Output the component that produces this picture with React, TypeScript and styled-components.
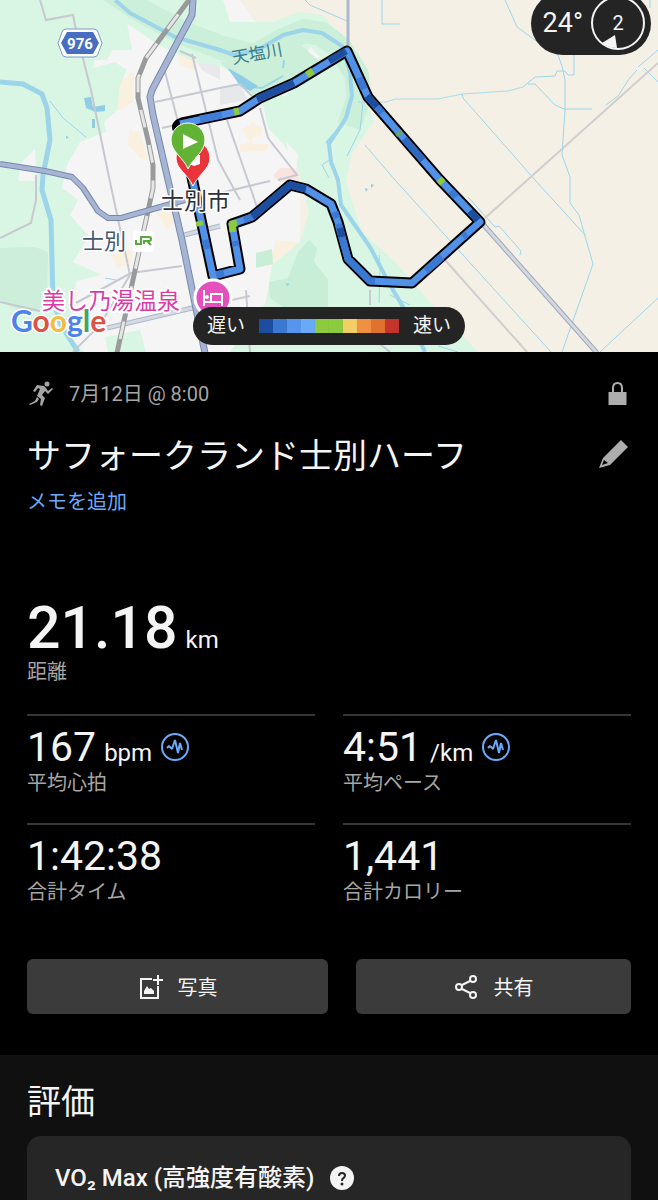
import React from "react";
import styled, { createGlobalStyle } from "styled-components";

const GlobalStyle = createGlobalStyle`
  * {
    box-sizing: border-box;
  }
  body {
    margin: 0;
    background-color: #000;
    color: #f4f4f4;
    font-family: Roboto, "Noto Sans CJK JP", sans-serif;
  }
  h1, h2, h3, p, dl, dd {
    margin: 0;
    font-weight: 400;
  }
`;

const MapSection = styled.section`
  position: relative;
  overflow: hidden;
  & > svg {
    display: block;
    width: 100%;
    height: auto;
  }
`;

const Weather = styled.div`
  position: absolute;
  top: -8px;
  right: 7px;
  display: flex;
  align-items: center;
  gap: 8px;
  padding: 4px 6px 5px 12px;
  border-radius: 32px;
  background-color: #242424;
  font-size: 27px;
`;

const Legend = styled.div`
  position: absolute;
  bottom: 7px;
  left: 50%;
  transform: translateX(-50%);
  display: flex;
  align-items: center;
  gap: 14px;
  padding: 0 14px;
  height: 38px;
  border-radius: 19px;
  background-color: #242424;
  font-size: 19px;
  line-height: 24px;
  white-space: nowrap;
`;

const Scale = styled.div`
  display: flex;
`;

const ScaleStep = styled.span<{ $color: string }>`
  width: 14px;
  height: 14px;
  background-color: ${(props) => props.$color};
`;

const Summary = styled.section`
  padding: 24px 27px 41px;
`;

const Row = styled.div`
  display: flex;
  align-items: center;
  justify-content: space-between;
`;

const DateLine = styled.div`
  display: flex;
  align-items: center;
  gap: 14px;
  height: 36px;
  color: #a6a6a6;
  font-size: 20px;
  line-height: 24px;
`;

const IconButton = styled.button`
  display: flex;
  padding: 0;
  border: 0;
  background: none;
  color: #adadad;
`;

const Title = styled.h1`
  font-size: 34px;
  line-height: 48px;
`;

const TitleRow = styled(Row)`
  margin-top: 20px;
`;

const MemoLink = styled.a`
  display: block;
  width: fit-content;
  margin-top: 8px;
  color: #6aaaf8;
  font-size: 20px;
  line-height: 28px;
  text-decoration: none;
`;

const Distance = styled.dl`
  display: flex;
  flex-direction: column-reverse;
  margin: 80px 0 30px;
`;

const StatGrid = styled.dl`
  display: grid;
  grid-template-columns: 1fr 1fr;
  column-gap: 28px;
`;

const Stat = styled.div`
  display: flex;
  flex-direction: column-reverse;
  padding: 7px 0 28px;
  border-top: 2px solid #363636;
`;

const Label = styled.dt`
  color: #a6a6a6;
  font-size: 20px;
  line-height: 24px;
`;

const Value = styled.dd<{ $large?: boolean }>`
  display: flex;
  align-items: baseline;
  gap: 8px;
  font-size: ${(props) => (props.$large ? "59px" : "41px")};
  font-weight: ${(props) => (props.$large ? 500 : 400)};
  line-height: ${(props) => (props.$large ? "64px" : "48px")};
`;

const Unit = styled.span`
  font-size: 24px;
  font-weight: 400;
  line-height: 24px;
`;

const ChartButton = styled(IconButton)`
  align-self: center;
  color: #6aaaf8;
`;

const Actions = styled.div`
  display: flex;
  gap: 28px;
  margin-top: 27px;
`;

const ActionButton = styled.button<{ $grow: number }>`
  flex: ${(props) => props.$grow} 1 0;
  display: flex;
  align-items: center;
  justify-content: center;
  gap: 14px;
  height: 55px;
  border: 0;
  border-radius: 6px;
  background-color: #3b3b3b;
  color: #f4f4f4;
  font-family: inherit;
  font-size: 20px;
`;

const Ratings = styled.section`
  padding: 23px 27px 0;
  background-color: #101010;
`;

const RatingsTitle = styled.h2`
  margin-bottom: 10px;
  font-size: 34px;
  line-height: 48px;
`;

const RatingCard = styled.article`
  display: flex;
  align-items: center;
  gap: 16px;
  padding: 24px 28px 4px;
  border-radius: 14px 14px 0 0;
  background-color: #262626;
`;

const RatingName = styled.h3`
  font-size: 24px;
  font-weight: 500;
  line-height: 36px;
`;

const paceColors = [
  "#1d4d9f",
  "#3b78d1",
  "#5596ec",
  "#69a9f8",
  "#8cca3f",
  "#8cca3f",
  "#f3cd65",
  "#ee9142",
  "#df722d",
  "#c4342b",
];

const routeSegments = [
  { color: "#3f7dd8", d: "M200 119L222 115" },
  { color: "#8cca3f", d: "M234 112L239 111" },
  { color: "#1d4d9f", d: "M257 99L294 83" },
  { color: "#8cca3f", d: "M307 75L313 71" },
  { color: "#1d4d9f", d: "M329 61L346 51" },
  { color: "#3b78d1", d: "M359 78L364 89" },
  { color: "#1d4d9f", d: "M367 96L377 107" },
  { color: "#3b78d1", d: "M377 107L382 113" },
  { color: "#69a957", d: "M398 132L400 135" },
  { color: "#2f67bd", d: "M404 139L423 160" },
  { color: "#8cca3f", d: "M439 179L443 183" },
  { color: "#3b78d1", d: "M451 191L456 197" },
  { color: "#1d4d9f", d: "M470 211L478 220" },
  { color: "#3b78d1", d: "M467 234L463 237" },
  { color: "#3b78d1", d: "M442 257L426 271" },
  { color: "#3b78d1", d: "M375 281L370 281L348 259L338 224" },
  { color: "#1d4d9f", d: "M342 237L340 228" },
  { color: "#3b78d1", d: "M337 218L335 212" },
  { color: "#1d4d9f", d: "M306 189L290 185L252 217" },
  { color: "#3b78d1", d: "M252 217L244 220" },
  { color: "#8cca3f", d: "M237 223L232 224L233 232" },
  { color: "#3b78d1", d: "M235 241L236 246" },
  { color: "#3b78d1", d: "M224 273L216 275" },
  { color: "#3b78d1", d: "M207 249L205 240" },
  { color: "#8cca3f", d: "M200 226L199 221" },
  { color: "#8a7d43", d: "M193 184L192 178" },
];

const CourseMap = () => (
  <svg viewBox="0 0 658 352" role="img" aria-label="コースマップ">
    <rect width="658" height="352" fill="#f4f0e6" />
    {/* town */}
    <path d="M0 0H240L300 90L300 352H0Z" fill="#f5f5f6" />
    <g fill="#faf0e0">
      <path d="M120 82L134 70L133 102L117 112Z" />
      <path d="M129 130L140 132L148 160L140 158L128 145Z" />
      <path d="M178 55L192 55L196 70L180 65Z" />
      <path d="M242 130L253 122L263 130L260 136L252 138L253 144L269 144L266 151L239 152L240 145L250 142Z" />
      <path d="M110 255L130 250L133 262L118 268Z" />
      <path d="M156 212L165 205L180 215L168 230Z" />
      <path d="M276 240L298 242L296 266L270 265Z" />
    </g>
    <path d="M273 176L280 168L297 168L300 180L280 182Z" fill="#fae4e0" />
    <path d="M194 58L220 66V80L202 70Z" fill="#e9e9eb" />
    <path d="M220 88L240 84L248 100L220 105Z" fill="#e7e8ea" />
    {/* fields and woods */}
    <g fill="#d9f5e3">
      <path d="M0 0H107L127 22L132 50L112 50L107 60L95 60L93 68L115 62L127 70L120 85L117 110L104 122L106 132L80 142L67 165L62 188L78 200L70 215L89 236L73 262L102 275L76 281L75 302L64 330L84 352H0Z" />
      <path d="M107 0H223L230 22H274L298 12L323 15L346 45L366 100L374 122L352 152L346 182L362 232L395 262L430 302L478 352H230L266 302L272 265L300 242L309 212L297 166L284 145L268 128L262 99L250 84L220 66L196 62L160 46L128 24Z" />
      <path d="M105 337L140 330L146 352H108Z" />
    </g>
    <path d="M0 248L35 247L48 252L47 305L25 315L0 300Z" fill="#cdeedb" />
    <path d="M309 240L317 248L314 262L328 280V312H290L270 298L269 282L288 278L298 252Z" fill="#c9eed7" />
    <path d="M256 253L272 249L273 264L256 268Z" fill="#c9eed7" />
    <path d="M35 149L37 181H18L21 163Z" fill="#f5f5f6" />
    <path d="M311 47L320 57L290 91L284 97L274 86ZM286 142L298 154L296 172L290 160Z" fill="#f5f5f6" />
    <path d="M107 -12L140 10L185 34L222 48L255 56L283 40L305 31L322 34L340 48L357 75L358 100L349 126" fill="none" stroke="#cbefd9" strokeWidth="24" strokeLinejoin="round" />
    <path d="M220 62L256 98L292 82L320 62L300 44L268 58Z" fill="#cbefd9" />

    {/* water */}
    <g fill="none" stroke="#9cd5ea" strokeLinejoin="round">
      <path d="M0 82L23 84L42 94L47 108L50 140L43 175L42 190L51 220L53 300L61 325L78 352" strokeWidth="5" />
      <path d="M115 0L130 13L175 37L220 50L234 55L258 50L283 35L303 30L322 33L342 46L350 72L352 96L346 118L329 144L331 162L338 180L341 205L370 247L390 285L402 305L425 352" strokeWidth="4" />
      <path d="M349 103L344 123L326 143" strokeWidth="2" />
      <path d="M230 70L242 86L262 88L283 76M284 60L283 68" strokeWidth="2" />
      <path d="M329 160L322 165L329 178M379 255L380 270L379 303M390 295L400 300L410 305" strokeWidth="1" />
      <path d="M50 101L63 118L86 137M363 103L360 130L347 156" strokeWidth="1" />
      <path d="M305 0L310 5L347 21M382 0V24H400" />
      <path d="M505 0L517 27L535 40L558 55L562 66L565 80V110L562 155L570 177V203L579 215L593 264L575 315L562 352" />
      <path d="M574 54V75H568L565 71H557L555 76L535 77L523 87" />
      <path d="M523 87L508 91L462 94L438 99L420 99L395 99L386 102L358 102" opacity="0.8" />
      <path d="M528 84H535L555 105L564 109H592" />
      <path d="M462 94L463 98L535 180L585 235" />
      <path d="M365 145L395 180L551 352M658 298L600 352" />
      <path d="M650 0V8M638 67L658 50M606 105L618 96L629 79L637 70M644 68L658 82" />
      <path d="M468 197L495 227L499 226L521 251L520 255M438 346L458 352M105 278L116 280" />
    </g>
    <g fill="#8fcde7">
      <path d="M84 98L91 97L93 107L105 105V111L95 112L91 110L86 108ZM92 119H95V128H92Z" />
      <path d="M228 68L242 76L258 86L250 91L240 86Z" />
      <path d="M365 188L368 189L366 192ZM371 184L374 185L371 188ZM286 283L290 284L287 286ZM66 136L69 137L66 139Z" />
    </g>

    {/* minor roads */}
    <g fill="none" stroke="#c7c9d1" strokeWidth="2">
      <path d="M40 0L46 20L73 15L77 35L91 90L110 182L130 275" />
      <path d="M36 175V200L31 223L0 238M73 352L100 325L130 275" />
      <path d="M0 302L40 311M76 303L131 273L182 266" />
      <path d="M155 102L220 88M162 128L180 124M165 72L178 122M192 54L218 160L240 200" />
      <path d="M180 51L196 58M227 120L247 178L258 210M260 108L268 138L297 175L278 180M220 88L240 84L260 104" />
      <path d="M220 193L270 181M246 290L250 352M218 303L250 296M370 290V305M380 344L390 352" />
      <path d="M658 63L485 218M445 260L527 352" stroke="#d1cecf" />
      <path d="M348 0V48" stroke="#acb9ca" strokeWidth="3" />
    </g>
    <path d="M107 328L205 305M184 235L220 226" fill="none" stroke="#aeb8ca" strokeWidth="5" />
    <path d="M107 328L205 305M184 235L220 226" fill="none" stroke="#d4d9e3" strokeWidth="3" />
    <path d="M481 222L597 353" stroke="#9da6b5" strokeWidth="5" />
    <path d="M481 222L597 353" stroke="#d3d9e2" strokeWidth="3" />

    {/* railway */}
    <path d="M189 0L146 58L138 78V98L148 140L153 165V188L117 353" fill="none" stroke="#999a9b" strokeWidth="5" />
    <path d="M189 0L146 58L138 78V98L148 140L153 165V188L117 353" fill="none" stroke="#e5e5e5" strokeWidth="3" strokeDasharray="18 18" strokeDashoffset="-18" />

    {/* highways */}
    <g fill="none" strokeLinejoin="round">
      <path d="M193 0L192 15L152 90L150 97L153 115L168 180L182 240L205 353" stroke="#7888aa" strokeWidth="7" />
      <path d="M0 164L45 171L72 177L83 188L98 211L108 218L121 218L185 200" stroke="#7888aa" strokeWidth="6" />
      <path d="M193 0L192 15L152 90L150 97L153 115L168 180L182 240L205 353" stroke="#a7b5d5" strokeWidth="5" />
      <path d="M0 164L45 171L72 177L83 188L98 211L108 218L121 218L185 200" stroke="#a7b5d5" strokeWidth="4" />
    </g>

    <g fontFamily='"Noto Sans CJK JP", sans-serif' stroke="#fff" strokeLinejoin="round" paintOrder="stroke">
      <text x="233" y="64" fontSize="17" fill="#3c7e8b" strokeWidth="0" transform="rotate(-10 233 64)">天塩川</text>
      <text x="82" y="249" fontSize="22" fill="#45576c" strokeWidth="3">士別</text>
      <text x="42" y="309" fontSize="23" fill="#db3da7" strokeWidth="4">美し乃湯温泉</text>
    </g>

    {/* running course */}
    <g fill="none" strokeLinejoin="round">
      <path d="M178 129Q176 125 182 123L240 111L260 98L294 83L347 51L368 97L440 180L480 222L412 283L370 281L348 259L338 222L331 204L306 189L290 185L252 217L232 224L240 269L213 276L190 168" stroke="#000" strokeWidth="11" />
      <path d="M180 124L240 111L260 98L294 83L347 51L368 97L440 180L480 222L412 283L370 281L348 259L338 222L331 204L306 189L290 185L252 217L232 224L240 269L213 276L190 168" stroke="#5191e8" strokeWidth="7" />
      {routeSegments.map((segment) => (
        <path key={segment.d} d={segment.d} stroke={segment.color} strokeWidth="7" />
      ))}
    </g>

    {/* finish and start pins */}
    <path d="M193 186C187 173 176 169 176 158A17 17 0 0 1 210 158C210 169 198 175 193 186Z" fill="#e8343a" stroke="#fff" />
    <path d="M187 155H200V164L194 166L187 163Z" fill="#fff" />
    <path d="M188 169C184 158 171 152 171 140A17 17 0 0 1 205 140C205 152 193 158 188 169Z" fill="#62b236" stroke="#fff" />
    <path d="M183 134V149L198 142Z" fill="#fff" />

    <text x="161" y="209" fontSize="23" fill="#2e3036" stroke="#fff" strokeWidth="3" strokeLinejoin="round" paintOrder="stroke" fontFamily='"Noto Sans CJK JP", sans-serif'>
      士別市
    </text>

    {/* station and hotel markers */}
    <rect x="133" y="231" width="21" height="21" rx="3" fill="#fff" />
    <path d="M136 240V244H141V237H149Q151 237 151 239Q151 241 149 241H144V244M147 241L151 245" fill="none" stroke="#56a83d" strokeWidth="2" />
    <circle cx="213" cy="298" r="18" fill="#e450bd" stroke="#fff" strokeWidth="3" />
    <path d="M204 290V306M204 302H222M222 306V294H211V302" fill="none" stroke="#fff" strokeWidth="2" />
    <circle cx="207" cy="297" r="2" fill="#fff" />

    {/* route shield */}
    <path d="M66 29H94Q97 29 98 32L102 43L98 54Q97 57 94 57H66Q63 57 62 54L58 43L62 32Q63 29 66 29Z" fill="#fff" stroke="#7f9ac9" />
    <path d="M67 32H93L99 43L93 54H67L61 43Z" fill="#466fc1" />
    <text x="80" y="49" fontSize="15" fontWeight="700" textAnchor="middle" fill="#fff">976</text>

    <text x="11" y="332" fontFamily="Lato, sans-serif" fontSize="30" fontWeight="700" stroke="#fff" strokeWidth="3" strokeLinejoin="round" paintOrder="stroke">
      <tspan fill="#4a83ec">G</tspan>
      <tspan fill="#de5145">o</tspan>
      <tspan fill="#f2bd42">o</tspan>
      <tspan fill="#4a83ec">g</tspan>
      <tspan fill="#43a45c">l</tspan>
      <tspan fill="#de5145">e</tspan>
    </text>
  </svg>
);

const RunnerIcon = () => (
  <svg width="28" height="28" viewBox="0 0 28 28" aria-hidden="true" fill="currentColor">
    <circle cx="20" cy="4" r="2.500" />
    <path d="M10 5L17 6L19 8L21 11L25 8L26 9L21 14L18 11L15 15L18 18L15 26L13 25L14 19L10 16L13 9L11 8L8 12L6 11Z" />
    <path d="M10 17L12 19L10 22L3 25L2 24L8 21Z" />
  </svg>
);

const LockIcon = () => (
  <svg width="27" height="28" viewBox="0 0 27 28" aria-hidden="true">
    <path d="M9 13V8Q9 3 13.500 3Q18 3 18 8V13" fill="none" stroke="currentColor" strokeWidth="2" />
    <path d="M4.500 12H22.500V25H4.500Z" fill="currentColor" />
  </svg>
);

const PencilIcon = () => (
  <svg width="32" height="32" viewBox="0 0 32 32" aria-hidden="true">
    <path fillRule="evenodd" d="M0 28L4 18L22 0L29 7L11 25ZM5 20L3 25L9 23Z" fill="currentColor" />
  </svg>
);

const PulseIcon = () => (
  <svg width="30" height="30" viewBox="0 0 30 30" aria-hidden="true" fill="none" stroke="currentColor" strokeWidth="2">
    <circle cx="15" cy="15" r="13" />
    <path d="M7 16L9 14L12 17L15 8L18 21L20 11L22 18" strokeLinejoin="bevel" />
  </svg>
);

const AddPhotoIcon = () => (
  <svg width="26" height="28" viewBox="0 0 26 28" aria-hidden="true">
    <path d="M14 6H3V25H20V13M20 2V12M15 7H25" fill="none" stroke="currentColor" strokeWidth="2" />
    <path d="M6 21V18L9 13L11 16L13 15L16 18V21Z" fill="currentColor" />
  </svg>
);

const ShareIcon = () => (
  <svg width="26" height="28" viewBox="0 0 26 28" aria-hidden="true" fill="none" stroke="currentColor" strokeWidth="2">
    <circle cx="5" cy="14" r="3" />
    <circle cx="19" cy="6" r="3" />
    <circle cx="19" cy="22" r="3" />
    <path d="M8 12L16 8M8 16L16 20" />
  </svg>
);

const HelpIcon = () => (
  <svg width="24" height="24" viewBox="0 0 24 24" aria-hidden="true">
    <circle cx="12" cy="12" r="12" fill="#f4f4f4" />
    <path d="M9 10Q9 7 12 7Q15 7 15 9.500Q15 11 13 12.500Q12 13 12 15" fill="none" stroke="#262626" strokeWidth="2" />
    <circle cx="12" cy="18" r="1.500" fill="#262626" />
  </svg>
);

const WindDial = () => (
  <svg width="54" height="54" viewBox="0 0 54 54" role="img" aria-label="風速 2">
    <circle cx="27" cy="27" r="26" fill="none" stroke="#f4f4f4" strokeWidth="2" />
    <path d="M24 39L11 47Q17 52 26 52Z" fill="#f4f4f4" />
    <text x="27" y="34" fontSize="20" textAnchor="middle" fill="#f4f4f4">2</text>
  </svg>
);

const stats = [
  { label: "平均心拍", value: "167", unit: "bpm", chart: true },
  { label: "平均ペース", value: "4:51", unit: "/km", chart: true },
  { label: "合計タイム", value: "1:42:38" },
  { label: "合計カロリー", value: "1,441" },
];

export default () => (
  <>
    <GlobalStyle />
    <main>
      <MapSection>
        <CourseMap />
        <Weather>
          <span>24°</span>
          <WindDial />
        </Weather>
        <Legend>
          <span>遅い</span>
          <Scale>
            {paceColors.map((color, index) => (
              <ScaleStep key={index} $color={color} />
            ))}
          </Scale>
          <span>速い</span>
        </Legend>
      </MapSection>
      <Summary>
        <Row>
          <DateLine>
            <RunnerIcon />
            <span>7月12日 @ 8:00</span>
          </DateLine>
          <IconButton aria-label="公開設定">
            <LockIcon />
          </IconButton>
        </Row>
        <TitleRow>
          <Title>サフォークランド士別ハーフ</Title>
          <IconButton aria-label="編集">
            <PencilIcon />
          </IconButton>
        </TitleRow>
        <MemoLink href="#memo">メモを追加</MemoLink>
        <Distance>
          <Label>距離</Label>
          <Value $large>
            21.18 <Unit>km</Unit>
          </Value>
        </Distance>
        <StatGrid>
          {stats.map((stat) => (
            <Stat key={stat.label}>
              <Label>{stat.label}</Label>
              <Value>
                {stat.value}
                {stat.unit && <Unit>{stat.unit}</Unit>}
                {stat.chart && (
                  <ChartButton aria-label={`${stat.label}のグラフ`}>
                    <PulseIcon />
                  </ChartButton>
                )}
              </Value>
            </Stat>
          ))}
        </StatGrid>
        <Actions>
          <ActionButton $grow={11}>
            <AddPhotoIcon />
            写真
          </ActionButton>
          <ActionButton $grow={10}>
            <ShareIcon />
            共有
          </ActionButton>
        </Actions>
      </Summary>
      <Ratings>
        <RatingsTitle>評価</RatingsTitle>
        <RatingCard>
          <RatingName>VO₂ Max (高強度有酸素)</RatingName>
          <IconButton aria-label="VO₂ Maxについて">
            <HelpIcon />
          </IconButton>
        </RatingCard>
      </Ratings>
    </main>
  </>
);
